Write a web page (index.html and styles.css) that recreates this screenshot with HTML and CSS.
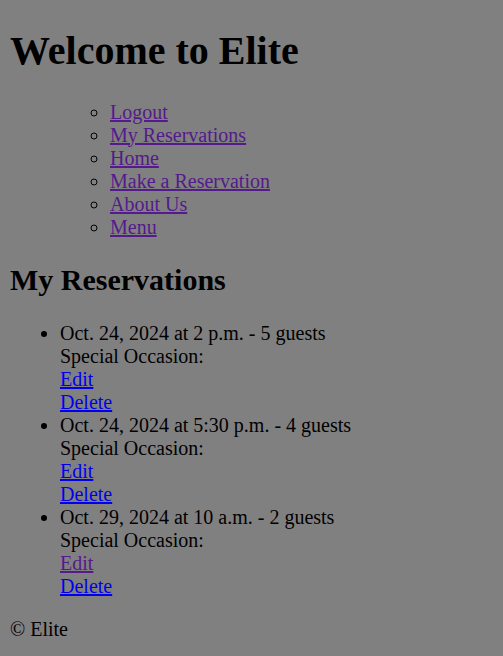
FILE: index.html
```html
<!DOCTYPE html>
<html lang="en">
<head>
<meta charset="utf-8">
<title>Elite</title>
<link rel="stylesheet" href="styles.css">
</head>
<body class="page">
<header>
<h1 class="title">Welcome to Elite</h1>
<nav>
<ul class="nav-outer">
<ul class="nav-list">
<li><a class="visited" href="#">Logout</a></li>
<li><a class="visited" href="#">My Reservations</a></li>
<li><a class="visited" href="#">Home</a></li>
<li><a class="visited" href="#">Make a Reservation</a></li>
<li><a class="visited" href="#">About Us</a></li>
<li><a class="visited" href="#">Menu</a></li>
</ul>
</ul>
</nav>
</header>
<main>
<h2 class="section-title">My Reservations</h2>
<ul class="res-list">
<li>Oct. 24, 2024 at 2 p.m. - 5 guests<br>Special Occasion: <br><a class="link" href="#">Edit</a><br><a class="link" href="#">Delete</a></li>
<li>Oct. 24, 2024 at 5:30 p.m. - 4 guests<br>Special Occasion: <br><a class="link" href="#">Edit</a><br><a class="link" href="#">Delete</a></li>
<li>Oct. 29, 2024 at 10 a.m. - 2 guests<br>Special Occasion: <br><a class="visited" href="#">Edit</a><br><a class="link" href="#">Delete</a></li>
</ul>
</main>
<footer>
<p class="footer-text">© Elite</p>
</footer>
</body>
</html>
```
FILE: styles.css
```css
html {
  background: #808080;
}
.page {
  margin: 0 10px 10px;
  font-family: "Liberation Serif", "Times New Roman", serif;
  font-size: 20px;
  color: #000;
  background: #808080;
}
.title {
  font-size: 40px;
  font-weight: bold;
  margin: 26.8px 0;
}
.nav-outer {
  margin: 20px 0;
  padding-left: 50px;
  list-style-type: disc;
}
.nav-list {
  margin: 0;
  padding-left: 50px;
  list-style-type: circle;
}
.section-title {
  font-size: 30px;
  font-weight: bold;
  margin: 24.9px 0;
}
.res-list {
  margin: 20px 0;
  padding-left: 50px;
  list-style-type: disc;
}
.link {
  color: #0000ee;
  text-decoration: underline;
}
.visited {
  color: #551a8b;
  text-decoration: underline;
}
.footer-text {
  margin: 20px 0;
}
```
